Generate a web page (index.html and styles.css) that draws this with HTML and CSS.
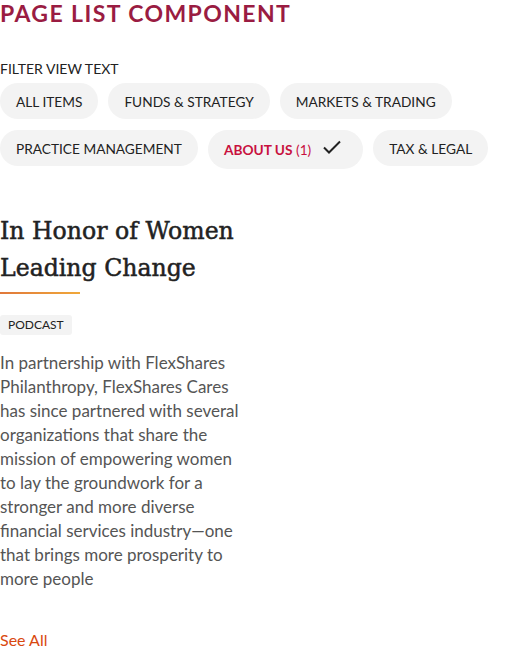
FILE: index.html
```html
<!DOCTYPE html>
<html>
<head>
<meta charset="utf-8">
<link rel="stylesheet" href="styles.css">
</head>
<body>
<main class="page-list">
  <h1 class="title">PAGE LIST COMPONENT</h1>
  <div class="filter-label">FILTER VIEW TEXT</div>
  <div class="chips">
    <span class="chip">ALL ITEMS</span>
    <span class="chip">FUNDS &amp; STRATEGY</span>
    <span class="chip">MARKETS &amp; TRADING</span>
    <span class="chip">PRACTICE MANAGEMENT</span>
    <span class="chip chip-active"><b>ABOUT US</b>&nbsp;(1)
      <svg class="check" width="20" height="16" viewBox="0 0 20 16"><path d="M2 8.5 L7 13.5 L18 2.5" fill="none" stroke="#222" stroke-width="2"/></svg>
    </span>
    <span class="chip">TAX &amp; LEGAL</span>
  </div>
  <article class="card">
    <h2 class="card-title">In Honor of Women Leading Change</h2>
    <div class="rule"></div>
    <span class="tag">PODCAST</span>
    <p class="desc">In partnership with FlexShares Philanthropy, FlexShares Cares has since partnered with several organizations that share the mission of empowering women to lay the groundwork for a stronger and more diverse financial services industry—one that brings more prosperity to more people</p>
  </article>
  <a class="see-all" href="#">See All</a>
</main>
</body>
</html>
```
FILE: styles.css
```css
* { box-sizing: border-box; }
body {
  margin: 0;
  font-family: "Lato", "Open Sans", sans-serif;
  color: #333;
  background: #fff;
}
.page-list { display: flex; flex-direction: column; align-items: flex-start; }
.title {
  margin: 0;
  padding-top: 0;
  font-size: 23px;
  line-height: 26px;
  font-weight: 700;
  letter-spacing: 1.4px;
  color: #9a1c42;
}
.filter-label {
  margin-top: 35px;
  font-size: 14px;
  line-height: 16px;
  color: #222;
}
.chips {
  margin-top: 6px;
  display: flex;
  flex-wrap: wrap;
  gap: 11px 10px;
  width: 500px;
  align-items: flex-start;
}
.chip {
  display: inline-flex;
  align-items: center;
  height: 36px;
  padding: 0 16px;
  border-radius: 18px;
  background: #f3f3f3;
  font-size: 13.7px;
  color: #222;
  white-space: nowrap;
}
.chip-active { height: 39px; border-radius: 20px; color: #c8103e; padding-right: 21px; }
.chip-active b { font-weight: 700; }
.check { margin-left: 11px; margin-top: -5px; }
.card { width: 245px; margin-top: 44px; display: flex; flex-direction: column; align-items: flex-start; }
.card-title {
  margin: 0;
  font-family: "DejaVu Serif", serif;
  font-size: 23.6px;
  line-height: 37px;
  font-weight: 400;
  -webkit-text-stroke: 0.5px #222;
  color: #222;
}
.rule {
  margin-top: 5px;
  width: 80px;
  height: 2px;
  background: linear-gradient(90deg, #e0783a, #f0a83a);
}
.tag {
  margin-top: 21px;
  background: #f3f3f3;
  border-radius: 3px;
  padding: 0 8px;
  height: 20px;
  line-height: 20px;
  font-size: 12px;
  color: #222;
}
.desc {
  margin: 16px 0 0;
  font-size: 17px;
  line-height: 24px;
  color: #555;
}
.see-all {
  margin-top: 37px;
  font-size: 16px;
  line-height: 24px;
  color: #d9480f;
  text-decoration: none;
}
```
